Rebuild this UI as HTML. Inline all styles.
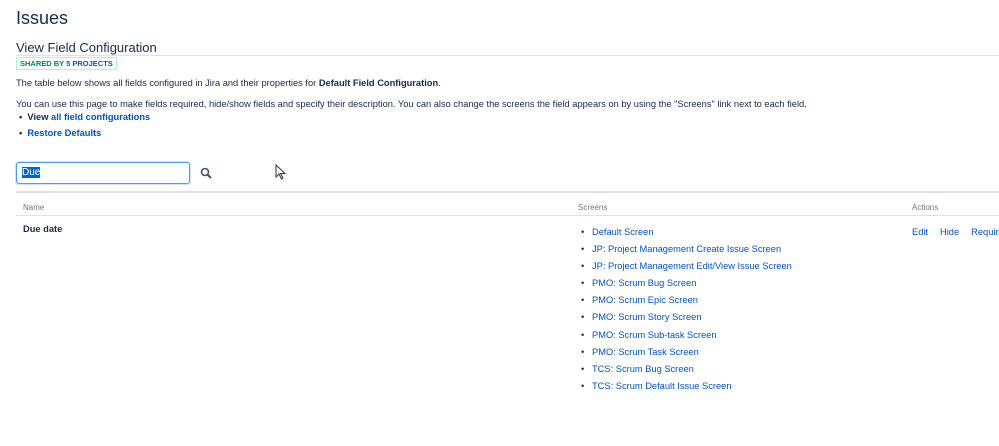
<!DOCTYPE html>
<html><head><style>
body{margin:0;width:999px;height:446px;overflow:hidden;background:#fff;font-family:"Liberation Sans",sans-serif;color:#172b4d;position:relative}
.a{position:absolute;white-space:nowrap}
a,.l{color:#0052cc;text-decoration:none}
.s{font-size:9.3px}
ul{margin:0;padding:0;list-style:none}
li span.b{display:inline-block;width:11px;padding-left:3px;color:#172b4d}
</style></head><body>
<div class="a" style="left:16px;top:8px;font-size:18px">Issues</div>
<div class="a" style="left:16px;top:40px;font-size:13px">View Field Configuration</div>
<div class="a" style="left:16px;top:55px;width:983px;border-top:1px solid #dfe1e6"></div>
<div class="a" style="left:16px;top:57px;border:1px solid #abf5d1;font-size:7.5px;font-weight:bold;padding:1px 3px;color:#00875a">SHARED BY <span style="color:#0052cc">5 PROJECTS</span></div>
<div class="a s" style="left:16px;top:78px">The table below shows all fields configured in Jira and their properties for <b>Default Field Configuration</b>.</div>
<div class="a s" style="left:16px;top:99px">You can use this page to make fields required, hide/show fields and specify their description. You can also change the screens the field appears on by using the "Screens" link next to each field.</div>
<div class="a s" style="left:19px;top:112px;font-weight:bold">•&nbsp; View <span class="l">all field configurations</span></div>
<div class="a s" style="left:19px;top:128px;font-weight:bold">•&nbsp; <span class="l">Restore Defaults</span></div>
<div class="a" style="left:16px;top:162px;width:172px;height:20px;border:1px solid #4c9aff;border-radius:3px;box-shadow:0 0 0 1px #cfe2ff"><span style="position:absolute;left:5px;top:4px;font-size:10px;background:#0066cc;color:#fff">Due</span></div>
<svg class="a" style="left:200px;top:167px" width="13" height="13" viewBox="0 0 13 13"><circle cx="5" cy="5" r="3.5" fill="none" stroke="#42526e" stroke-width="1.6"/><path d="M7.5 7.5L11 11" stroke="#42526e" stroke-width="2"/></svg>
<svg class="a" style="left:275px;top:164px" width="12" height="16"><path d="M1 1V13L4 10L6.5 15L8 14L5.5 9.5H10Z" fill="#fff" stroke="#333" stroke-width="1"/></svg>
<div class="a" style="left:16px;top:191px;width:983px;border-top:2px solid #dfe1e6"></div>
<div class="a" style="left:23px;top:203px;font-size:8px;color:#6b778c">Name</div>
<div class="a" style="left:578px;top:203px;font-size:8px;color:#6b778c">Screens</div>
<div class="a" style="left:912px;top:203px;font-size:8px;color:#6b778c">Actions</div>
<div class="a" style="left:16px;top:215px;width:983px;border-top:1px solid #dfe1e6"></div>
<div class="a s" style="left:23px;top:224px;font-weight:bold">Due date</div>
<div class="a s" style="left:912px;top:227px;color:#0052cc">Edit<span style="margin-left:12px">Hide</span><span style="margin-left:12px">Required</span></div>
<ul class="a s" style="left:578px;top:224px;line-height:17.1px">
<li><span class="b">•</span><span class="l">Default Screen</span></li>
<li><span class="b">•</span><span class="l">JP: Project Management Create Issue Screen</span></li>
<li><span class="b">•</span><span class="l">JP: Project Management Edit/View Issue Screen</span></li>
<li><span class="b">•</span><span class="l">PMO: Scrum Bug Screen</span></li>
<li><span class="b">•</span><span class="l">PMO: Scrum Epic Screen</span></li>
<li><span class="b">•</span><span class="l">PMO: Scrum Story Screen</span></li>
<li><span class="b">•</span><span class="l">PMO: Scrum Sub-task Screen</span></li>
<li><span class="b">•</span><span class="l">PMO: Scrum Task Screen</span></li>
<li><span class="b">•</span><span class="l">TCS: Scrum Bug Screen</span></li>
<li><span class="b">•</span><span class="l">TCS: Scrum Default Issue Screen</span></li>
</ul>
</body></html>
